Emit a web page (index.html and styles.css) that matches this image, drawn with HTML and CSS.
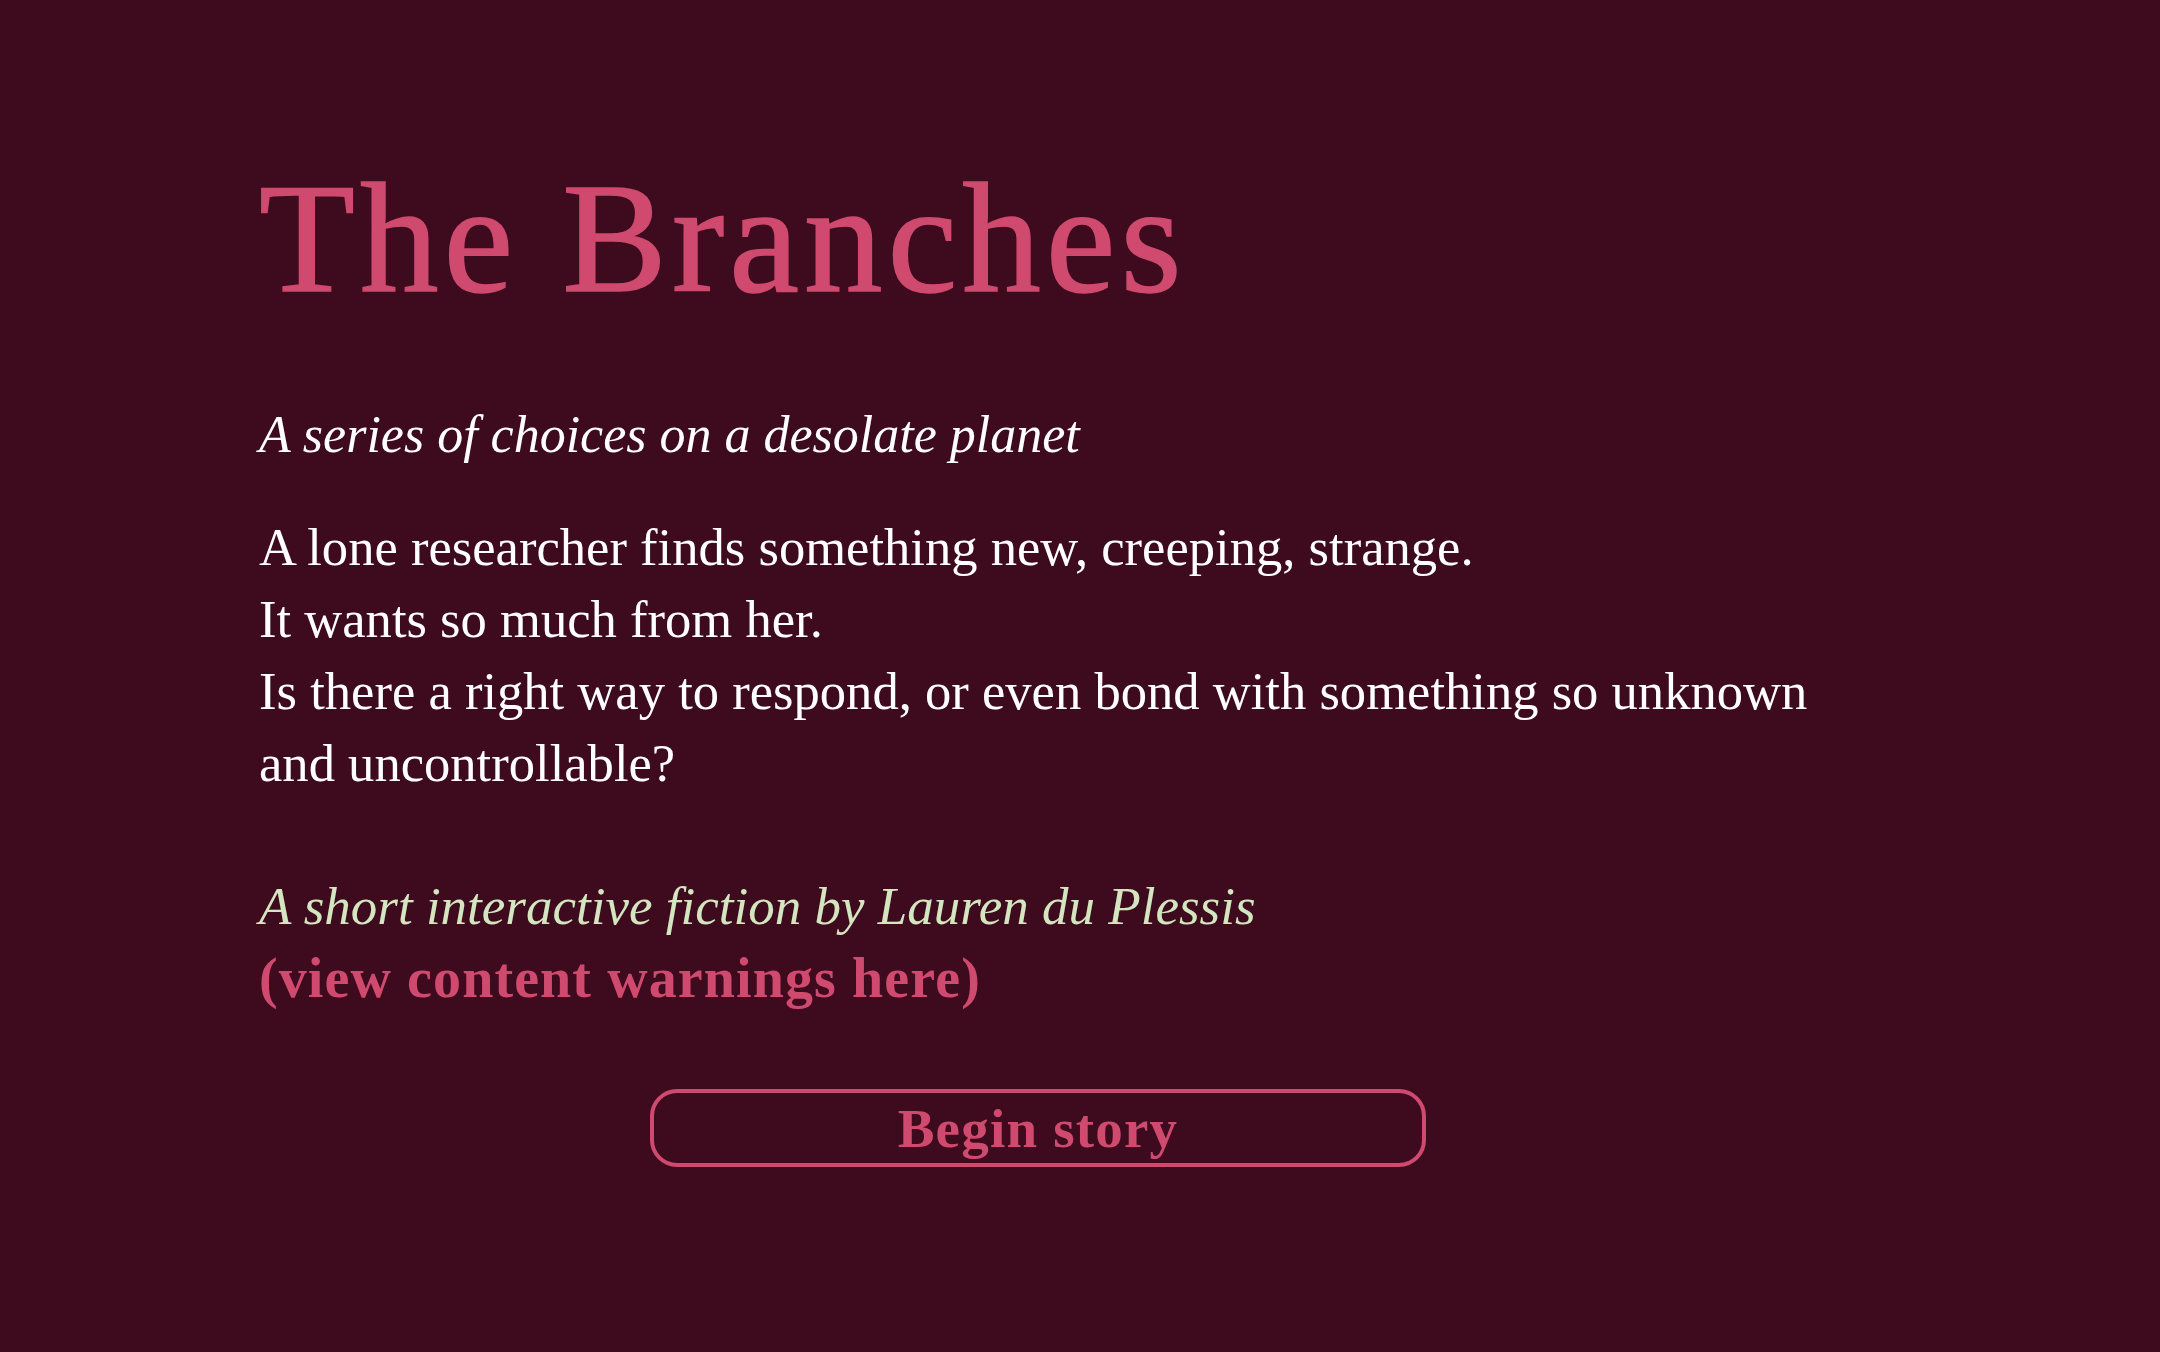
FILE: index.html
```html
<!DOCTYPE html>
<html>
  <head>
    <meta charset="utf-8">
    <meta name="viewport" content="width=device-width, initial-scale=1">
    <title>The Branches</title>
    <link rel="stylesheet" href="styles.css">
  </head>
  <body>
    <div class="story">
      <h1 class="title">The Branches</h1>
      <p class="tagline">A series of choices on a desolate planet</p>
      <p class="blurb">
        A lone researcher finds something new, creeping, strange.<br>
        It wants so much from her.<br>
        Is there a right way to respond, or even bond with something so unknown and uncontrollable?
      </p>
      <p class="credit">
        <span class="byline">A short interactive fiction by Lauren du Plessis</span><br>
        <a class="warnings" href="#warnings">(view content warnings here)</a>
      </p>
      <button class="begin">Begin story</button>
    </div>
  </body>
</html>
```

FILE: styles.css
```css
body {
  margin: 0;
  background: #3d0a1e;
  color: #ffffff;
  font-family: "Liberation Serif", "Times New Roman", serif;
}
.story {
  width: 1558px;
  padding: 144px 0 0 259px;
  display: flex;
  flex-direction: column;
}
.title {
  margin: 0;
  font-size: 157px;
  line-height: 188px;
  font-weight: normal;
  letter-spacing: 5px;
  color: #cf4a6e;
  -webkit-text-stroke: 1.5px #cf4a6e;
}
.tagline {
  margin: 67px 0 0 0;
  font-size: 52px;
  line-height: 72px;
  font-style: italic;
}
.blurb {
  margin: 40px 0 0 0;
  font-size: 52.6px;
  line-height: 72px;
}
.credit {
  margin: 71px 0 0 0;
  font-size: 53px;
  line-height: 72px;
}
.byline {
  font-style: italic;
  color: #d3e6c0;
}
.warnings {
  font-size: 56px;
  font-weight: bold;
  letter-spacing: 1.1px;
  color: #cf4a6e;
  text-decoration: none;
}
.begin {
  align-self: center;
  margin-top: 74px;
  width: 776px;
  height: 78px;
  border: 4px solid #cf4a6e;
  border-radius: 27px;
  background: transparent;
  color: #cf4a6e;
  font-family: "Liberation Serif", "Times New Roman", serif;
  font-size: 55px;
  font-weight: bold;
  letter-spacing: 1.2px;
  padding: 0;
}
```
